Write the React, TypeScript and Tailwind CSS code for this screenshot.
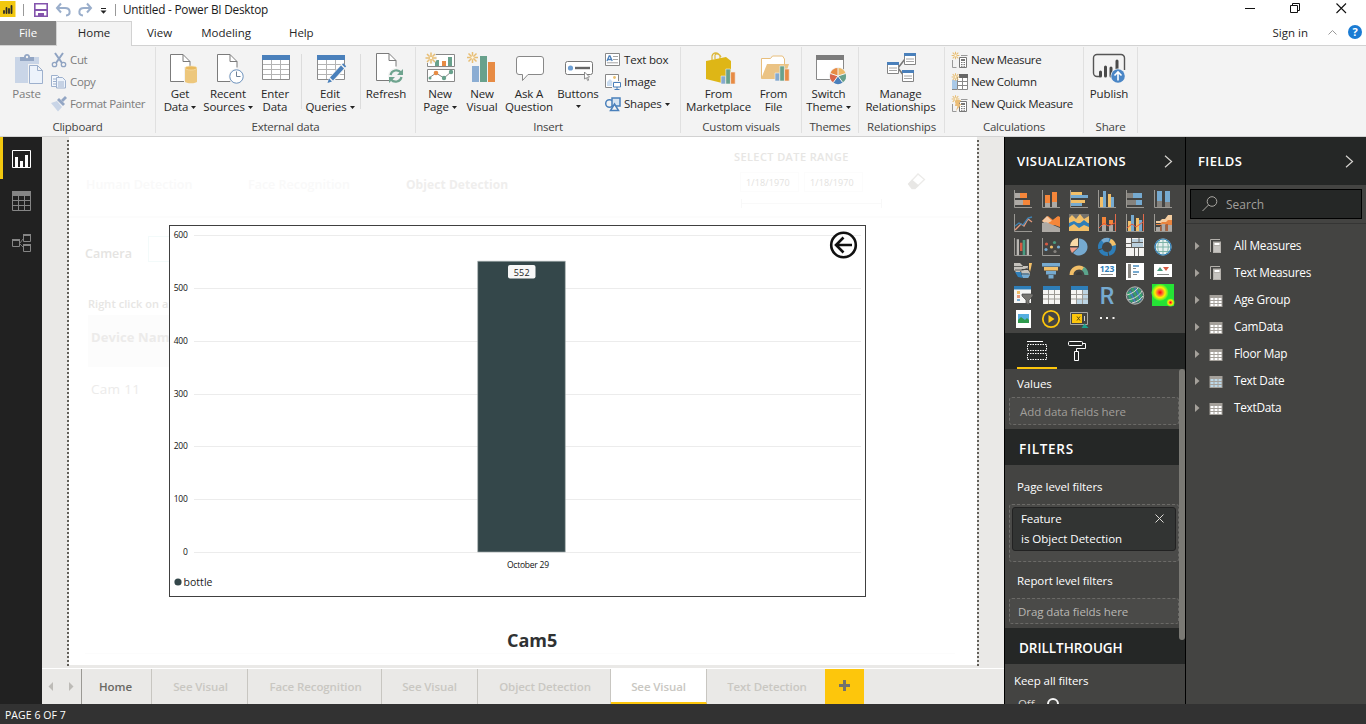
import React from "react";

type Kids = { children?: React.ReactNode };

/* Drawing surface whose size follows its view box. */
function Ic({ b, className = "", children }: { b: string; className?: string } & Kids) {
  const [, , w, h] = b.split(" ");
  return (
    <svg viewBox={b} width={w} height={h} className={"block shrink-0 overflow-visible " + className} fill="none">
      {children}
    </svg>
  );
}

const Caret = () => (
  <svg viewBox="0 0 5 3" width="5" height="3" className="ml-[3px] inline-block align-middle">
    <path d="M0 0h5L2.500 3z" fill="#222" />
  </svg>
);

const Star = ({ x, y, r = 5 }: { x: number; y: number; r?: number }) => (
  <g transform={`translate(${x} ${y}) scale(${r / 5})`} stroke="#e8be74" strokeWidth="1.5">
    <path d="M0-5.5V-2M0 5.500V2M-5.500 0H-2M5.500 0H2M-4-4l2.500 2.500M4 4L1.500 1.500M-4 4l2.500-2.500M4-4L1.500-1.500" />
    <circle r="1.800" strokeWidth="1" fill="#fff7e4" />
  </g>
);

const Doc = ({ x, y }: { x: number; y: number }) => (
  <g transform={`translate(${x} ${y})`}>
    <path d="M.5.5h13l6.500 6.500v21H.5z" fill="#fff" />
    <path d="M14 27.500H.5V.5h12.500l7 7v6M13 .5v7h7" stroke="#7b7b7b" />
  </g>
);

const Grid = ({ x, y }: { x: number; y: number }) => (
  <g transform={`translate(${x} ${y})`}>
    <path d="M.5.5h27v24H.5z" fill="#fff" stroke="#8b8b8b" />
    <path d="M0 0h28v5H0z" fill="#4a80bb" />
    <path d="M1 9.500h26M1 14.500h26M1 19.500h26M9.500 5v19M18.500 5v19" stroke="#b3b3b3" />
  </g>
);

function Big({ w, icon, lines, caret, dim }: { w: string; icon: React.ReactNode; lines: string[]; caret?: boolean; dim?: boolean }) {
  return (
    <div className={`flex ${w} shrink-0 flex-col items-center pt-[7px] tracking-[-.12px] ${dim ? "text-[#7c7c7c]" : "text-[#262626]"}`}>
      {icon}
      <div className="mt-px whitespace-nowrap text-center">
        {lines.map((l, i) => (
          <div key={i}>
            {l}
            {caret && i === lines.length - 1 && <Caret />}
          </div>
        ))}
      </div>
    </div>
  );
}

function Small({ icon, text, caret }: { icon: React.ReactNode; text: string; caret?: boolean }) {
  return (
    <div className="flex h-[22px] items-center gap-[3px] whitespace-nowrap">
      {icon}
      <span className="mb-[2px]">
        {text}
        {caret && <Caret />}
      </span>
    </div>
  );
}

function Group({ w, name, children }: { w: string; name: string } & Kids) {
  return (
    <div className={`flex ${w} h-[90px] shrink-0 flex-col`}>
      <div className="flex h-[74px] w-full">
        <div className="flex flex-1">{children}</div>
        <div className="mt-px w-px bg-[#e0e0e0]" />
      </div>
      <div className="flex h-[13px] w-full">
        <div className="flex-1 text-center tracking-[-.22px] text-[#444]">{name}</div>
        <div className="w-px bg-[#e0e0e0]" />
      </div>
    </div>
  );
}

const Sep = () => <div className="mt-2 h-[55px] w-px shrink-0 bg-[#dcdcdc]" />;

const Bars = ({ x, y }: { x: number; y: number }) => (
  <g transform={`translate(${x} ${y})`} stroke="#f3f3f3" strokeWidth=".6">
    <path d="M0 7h4.600v8H0z" fill="#86aad0" />
    <path d="M4.800 0h4.600v15H4.800z" fill="#68a18c" />
    <path d="M9.600 3h4.600v12H9.600z" fill="#e78b44" />
  </g>
);

const Calc = ({ x, y }: { x: number; y: number }) => (
  <g transform={`translate(${x} ${y})`}>
    <path d="M.5.5h7v10h-7z" fill="#fff" stroke="#777" />
    <path d="M2 2h4v2H2z" fill="#777" />
    <path d="M2 5.500h4M2 7.500h4M2 9.300h4" stroke="#777" strokeDasharray="1 .5" />
  </g>
);

const LinkBox = ({ x, y }: { x: number; y: number }) => (
  <g transform={`translate(${x} ${y})`}>
    <path d="M.5.5h11v11H.5z" fill="#fff" stroke="#848484" />
    <path d="M0 0h12v3H0z" fill="#4a80bb" />
    <path d="M2 6h8M2 8.500h8" stroke="#a4a4a4" />
  </g>
);

function Ribbon() {
  return (
    <div className="flex h-[92px] shrink-0 border-y border-[#d2d2d2] bg-[#f3f3f3]">
      <Group w="w-[156px]" name="Clipboard">
        <Big
          w="ml-[5px] w-[43px]"
          dim
          lines={["Paste"]}
          icon={
            <Ic b="5 53 44 33">
              <path d="M15 57h24v26H15z" fill="#c9d5e7" />
              <path d="M20 61v-4h4c0-4 6-4 6 0h4v4z" fill="#93a6c4" />
              <circle cx="27" cy="57" r="1.200" fill="#f3f3f3" />
              <path d="M28 64h10.500l5.500 5.500V85H28z" fill="#f3f3f3" />
              <path d="M29.500 65.500h8l5 5v13h-13zM37.500 65.500v5h5" fill="#edf3fb" stroke="#9db0cd" />
            </Ic>
          }
        />
        <div className="ml-[3px] mt-[3px] tracking-[-.36px] text-[#7c7c7c]">
          <Small
            text="Cut"
            icon={
              <Ic b="51 52 16 16">
                <path d="M55 53l7 10M63 53l-7 10" stroke="#8fa3c2" strokeWidth="2" />
                <circle cx="54.500" cy="64.500" r="2.200" stroke="#8fa3c2" strokeWidth="1.300" />
                <circle cx="63.500" cy="64.500" r="2.200" stroke="#8fa3c2" strokeWidth="1.300" />
              </Ic>
            }
          />
          <Small
            text="Copy"
            icon={
              <Ic b="51 74 16 16">
                <path d="M51.500 75.500h6l2 2v9h-8z" fill="#f5f8fc" stroke="#9db0cd" />
                <path d="M53 79h4M53 81.500h3M53 84h3" stroke="#9db0cd" />
                <path d="M56.500 77.500h6l3 3v7.500h-9z" fill="#edf3fb" stroke="#9db0cd" />
                <path d="M58 82h6M58 84h6M58 86h6" stroke="#9db0cd" />
              </Ic>
            }
          />
          <Small
            text="Format Painter"
            icon={
              <Ic b="51 96 16 16">
                <path d="M51 103l6-2 5 6-4 4.500z" fill="#c9d5e7" />
                <path d="M57 100l2-2 6 6-2 2z" fill="#93a6c4" />
                <path d="M61 100l4-4 2 2-4 4z" fill="#93a6c4" />
              </Ic>
            }
          />
        </div>
      </Group>

      <Group w="w-[260px]" name="External data">
        <Big
          w="ml-[2px] w-[44px]"
          lines={["Get", "Data"]}
          caret
          icon={
            <Ic b="158 53 44 33">
              <Doc x={170} y={54} />
              <path d="M184 67h14v17h-14z" fill="#f3f3f3" />
              <path d="M185 68v13.500c0 2.400 12 2.400 12 0V68" fill="#edc77c" />
              <ellipse cx="191" cy="68" rx="6" ry="2" fill="#e9b95c" stroke="#f7e3b8" strokeWidth=".6" />
            </Ic>
          }
        />
        <Big
          w="w-[52px]"
          lines={["Recent", "Sources"]}
          caret
          icon={
            <Ic b="206 53 44 33">
              <Doc x={217} y={54} />
              <circle cx="236.500" cy="76.500" r="8" fill="#f3f3f3" />
              <circle cx="236.500" cy="76.500" r="6.700" fill="#fff" stroke="#6d92bd" />
              <path d="M236.500 71.500v5h4" stroke="#6d7f94" />
            </Ic>
          }
        />
        <Big
          w="w-[42px]"
          lines={["Enter", "Data"]}
          icon={
            <Ic b="253 53 44 33">
              <Grid x={262} y={55} />
            </Ic>
          }
        />
        <div className="w-[5px]" />
        <Sep />
        <Big
          w="ml-[1px] w-[54px]"
          lines={["Edit", "Queries"]}
          caret
          icon={
            <Ic b="308 53 44 33">
              <Grid x={317} y={55} />
              <path d="M327 84l2-6L342 63l5 4-14 15z" fill="#f3f3f3" />
              <path d="M327.500 83l1.500-4.500 3 3zM330 77.500l11-12 3 3-11 12zM342 64.500l1.200-1.200 3 3L345 67.500z" fill="#4a80bb" />
            </Ic>
          }
        />
        <div className="w-[3px]" />
        <Sep />
        <Big
          w="w-[50px]"
          lines={["Refresh"]}
          icon={
            <Ic b="364 53 44 33">
              <Doc x={376} y={53} />
              <circle cx="396" cy="76" r="8" fill="#f3f3f3" />
              <path d="M390.500 75c1-5 7.500-6.200 10.500-2.500M401.500 77c-1 5-7.500 6.200-10.500 2.500" stroke="#6fa48f" strokeWidth="2.200" />
              <path d="M403 69v6h-6zM389 83v-6h6z" fill="#6fa48f" />
            </Ic>
          }
        />
      </Group>

      <Group w="w-[265px]" name="Insert">
        <Big
          w="ml-[2px] w-[44px]"
          lines={["New", "Page"]}
          caret
          icon={
            <Ic b="418 53 44 33">
              <path d="M427.500 54.500h27v12h-27zM427.500 69.500h27v12h-27z" fill="#fff" stroke="#888" />
              <path d="M435 60h4v6h-4z" fill="#68a18c" />
              <path d="M442 61h4v5h-4z" fill="#e78b44" />
              <path d="M448 57h4v9h-4z" fill="#68a18c" />
              <path d="M429 78l7-5 8 5 7-6" stroke="#888" />
              <circle cx="436" cy="73" r="2.300" fill="#e78b44" />
              <circle cx="430" cy="78" r="1.500" fill="#68a18c" />
              <circle cx="444" cy="78" r="2.200" fill="#68a18c" />
              <circle cx="451" cy="72" r="2.200" fill="#68a18c" />
              <circle cx="431" cy="58" r="6" fill="#f3f3f3" />
              <Star x={431} y={58} />
            </Ic>
          }
        />
        <Big
          w="w-[40px]"
          lines={["New", "Visual"]}
          icon={
            <Ic b="460 53 44 33">
              <path d="M472 66h7v16h-7z" fill="#8badd3" />
              <path d="M480 56h7v26h-7z" fill="#68a18c" />
              <path d="M488 62h7v20h-7z" fill="#e78b44" />
              <Star x={472.500} y={57.500} />
            </Ic>
          }
        />
        <Big
          w="w-[54px]"
          lines={["Ask A", "Question"]}
          icon={
            <Ic b="507 53 44 33">
              <path d="M519 56.500h22a2.500 2.500 0 012.500 2.500v13a2.500 2.500 0 01-2.500 2.500h-13l-5.500 6v-6H519a2.500 2.500 0 01-2.500-2.500V59a2.500 2.500 0 012.500-2.500z" fill="#fff" stroke="#888" />
            </Ic>
          }
        />
        <div className="flex w-[44px] shrink-0 flex-col items-center pt-[7px] tracking-[-.1px] text-[#262626]">
          <Ic b="556 53 44 33">
            <rect x="565.500" y="61.500" width="27" height="13" rx="2" fill="#fff" stroke="#777" />
            <circle cx="570.500" cy="68" r="2.600" fill="#6d9fd4" />
            <path d="M575 68h15" stroke="#666" strokeWidth="2.400" />
            <path d="M584.500 72l5 5-2 .3 1.200 2.800-1 .5-1.300-2.900-1.900 1.300z" fill="#fff" stroke="#777" strokeWidth=".8" />
          </Ic>
          <div className="mt-px">Buttons</div>
          <svg viewBox="0 0 5 3" width="5" height="3" className="mt-[5px]">
            <path d="M0 0h5L2.500 3z" fill="#222" />
          </svg>
        </div>
        <div className="ml-[5px] mt-[3px] tracking-[-.2px] text-[#262626]">
          <Small
            text="Text box"
            icon={
              <Ic b="605 52 16 16">
                <path d="M605.500 53.500h14v12h-14z" fill="#fff" stroke="#888" />
                <path d="M607 61l2.200-5h.8l2.200 5M608 59.500h3" stroke="#4a80bb" strokeWidth="1.300" />
                <path d="M613 56.500h5M613 59.500h5M607 62.800h11" stroke="#a4a4a4" />
              </Ic>
            }
          />
          <Small
            text="Image"
            icon={
              <Ic b="605 74 16 16">
                <path d="M605.500 74.500h13v13h-13z" fill="#fff" stroke="#888" />
                <circle cx="614.500" cy="77.500" r="1.400" fill="#eabf6e" />
                <path d="M607 86v-4l3-3 4 4v3z" fill="#c9dcf0" />
                <path d="M612 81h10v9h-10z" fill="#f3f3f3" />
                <path d="M613.500 82.500h7v4.500h-7z" fill="#fff" stroke="#4a80bb" />
                <path d="M617 87v2M614.500 89.500h5" stroke="#4a80bb" />
              </Ic>
            }
          />
          <Small
            text="Shapes"
            caret
            icon={
              <Ic b="605 96 16 16">
                <circle cx="609.500" cy="103.500" r="3.800" stroke="#4a80bb" strokeWidth="1.500" />
                <path d="M612 98h8v8h-8z" fill="#d6e4f2" stroke="#4a80bb" strokeWidth="1.500" />
                <path d="M614.500 104l4 6.500h-8z" fill="#f3f3f3" stroke="#4a80bb" strokeWidth="1.500" />
              </Ic>
            }
          />
        </div>
      </Group>

      <Group w="w-[121px]" name="Custom visuals">
        <Big
          w="ml-[2px] w-[71px] tracking-[-.3px]"
          lines={["From", "Marketplace"]}
          icon={
            <Ic b="696 53 44 33">
              <path d="M711 60v-4c1-4 6-4.500 8 0v4M714 59v-4c1-2 5-1 6 2" stroke="#dcb83a" strokeWidth="1.200" />
              <path d="M705 61l20-4 5 4v17l-9 5-16-4z" fill="#deb616" />
              <Bars x={720} y={69} />
            </Ic>
          }
        />
        <Big
          w="w-[39px]"
          lines={["From", "File"]}
          icon={
            <Ic b="751 53 44 33">
              <path d="M760.500 78V58.500h9l2-2.500h10l2 3v6" fill="#fff" stroke="#e8be7c" />
              <path d="M760 79l6-15h22l-5 15z" fill="#ebc384" />
              <Bars x={774} y={66} />
            </Ic>
          }
        />
      </Group>

      <Group w="w-[57px]" name="Themes">
        <Big
          w="w-[53px]"
          lines={["Switch", "Theme"]}
          caret
          icon={
            <Ic b="806 53 44 33">
              <path d="M815.500 55.500h27v24h-27z" fill="#fff" stroke="#888" />
              <path d="M815 55h28v5h-28z" fill="#7c7c7c" />
              <circle cx="837" cy="76" r="9" fill="#f3f3f3" />
              <path d="M837 76v-8a8 8 0 017.600 5.500z" fill="#edb967" />
              <path d="M837 76l7.600-2.500a8 8 0 01-2.900 9z" fill="#68a18c" />
              <path d="M837 76l4.700 6.500a8 8 0 01-9.400 0z" fill="#4a80bb" />
              <path d="M837 76l-4.700 6.500a8 8 0 01-2.900-9z" fill="#d9664a" />
              <path d="M837 76l-7.600-2.500A8 8 0 01837 68z" fill="#e78b44" />
              <path d="M837 76v-8M837 76l7.600-2.500M837 76l4.700 6.500M837 76l-4.700 6.500M837 76l-7.600-2.500" stroke="#f3f3f3" />
            </Ic>
          }
        />
      </Group>

      <Group w="w-[86px]" name="Relationships">
        <Big
          w="w-[83px]"
          lines={["Manage", "Relationships"]}
          icon={
            <Ic b="878 53 44 33">
              <path d="M897 68l7-9M897 68l6 8" stroke="#777" strokeWidth="1.600" />
              <LinkBox x={903} y={53} />
              <LinkBox x={886} y={62} />
              <LinkBox x={901} y={70} />
            </Ic>
          }
        />
      </Group>

      <Group w="w-[139px]" name="Calculations">
        <div className="ml-[6px] mt-[3px] tracking-[-.32px] text-[#262626]">
          <Small
            text="New Measure"
            icon={
              <Ic b="951 52 17 16">
                <path d="M952.500 60v7.500h4M961 55.500h6.500" stroke="#999" />
                <Calc x={959} y={57} />
                <Star x={955.500} y={55.500} r={3.500} />
              </Ic>
            }
          />
          <Small
            text="New Column"
            icon={
              <Ic b="951 74 17 16">
                <path d="M952 80h5v10h-5z" fill="#a9c9e8" />
                <path d="M957.500 76.500h10v13h-10z" fill="#fff" />
                <path d="M957.500 77v12.500h10V77M962.500 78v11M957 81.500h11M957 85.500h11M952 89.500h5" stroke="#888" />
                <path d="M959 74h9v4h-9z" fill="#666" />
                <Star x={955.500} y={77} r={3.500} />
              </Ic>
            }
          />
          <Small
            text="New Quick Measure"
            icon={
              <Ic b="951 96 17 16">
                <path d="M952.500 104v7.500h4M961 99.500h6.500" stroke="#999" />
                <Calc x={959} y={101} />
                <path d="M956 100h5l-2 4h2.500l-5.500 7 1.500-5H955z" fill="#ebbd78" />
                <Star x={955.500} y={99} r={3.500} />
              </Ic>
            }
          />
        </div>
      </Group>

      <Group w="w-[54px]" name="Share">
        <Big
          w="w-[50px]"
          lines={["Publish"]}
          icon={
            <Ic b="1087 53 44 33">
              <path d="M1100 76.500h-3a3.500 3.500 0 01-3.500-3.500V58a3.500 3.500 0 013.500-3.500h24a3.500 3.500 0 013.500 3.500v12" stroke="#555" strokeWidth="1.400" />
              <path d="M1100.500 76v-4M1105.500 76V67M1111 76v-8M1117 75V61" stroke="#4a4a4a" strokeWidth="3" strokeLinecap="round" />
              <circle cx="1118" cy="76" r="7.500" fill="#f3f3f3" />
              <circle cx="1118" cy="76" r="6.800" fill="#4a86c6" />
              <path d="M1118 80.500v-8M1114.500 75.500l3.500-3.500 3.500 3.500" stroke="#fff" strokeWidth="1.600" />
            </Ic>
          }
        />
      </Group>
    </div>
  );
}

function TopBar() {
  return (
    <>
      <div className="flex h-[21px] shrink-0 items-start bg-white">
        <Ic b="0 0 50 20">
          <path d="M0 1h15.500v16H0z" fill="#f2c80f" />
          <path d="M4 13v-2M6.500 13V8M9 13V9M11.500 13V6" stroke="#2b2b2b" strokeWidth="1.800" strokeLinecap="round" />
          <path d="M23.500 4v12" stroke="#999" />
          <path d="M34.800 3.800h12.400v12.400H34.800z" stroke="#8454ad" strokeWidth="1.600" />
          <path d="M35 9h12v2H35z" fill="#8454ad" />
          <path d="M38 13h6v3h-6z" fill="#8454ad" />
        </Ic>
        <Ic b="50 0 73 20">
          <path d="M58 8h7c6 0 6 7 1 7.500M61 3.500L57 8l4 4.500" stroke="#9aaecb" strokeWidth="2" />
          <path d="M90 8h-6c-6 0-6 7-1 7.500M87 3.500L91 8l-4 4.500" stroke="#9aaecb" strokeWidth="2" />
          <path d="M101 8.500h5" stroke="#222" />
          <path d="M100.500 10.500h6l-3 3.200z" fill="#222" />
          <path d="M115.500 4v12" stroke="#999" />
        </Ic>
        <span className="mt-[3px] text-[11.800px] tracking-[-.23px] text-[#1a1a1a]">Untitled - Power BI Desktop</span>
        <div className="flex-1" />
        <Ic b="1240 0 126 20">
          <path d="M1245 8.500h10" stroke="#111" />
          <path d="M1290.500 5.500h7v7h-7zM1292.500 5.500v-2h7v7h-2" stroke="#111" />
          <path d="M1336.500 3.500l9.500 9.500M1346 3.500L1336.500 13" stroke="#111" strokeWidth="1.100" />
        </Ic>
      </div>
      <div className="flex h-[24px] shrink-0 bg-white text-[#262626]">
        <div className="h-full w-[56px] bg-[#838383] pt-[5px] text-center text-white">File</div>
        <div className="relative z-10 -mb-px w-[76px] border-x border-t border-[#d2d2d2] bg-[#f3f3f3] pt-[4px] text-center">Home</div>
        <div className="ml-[15px] pt-[5px]">View</div>
        <div className="ml-[29px] pt-[5px]">Modeling</div>
        <div className="ml-[38px] pt-[5px] tracking-[-.1px]">Help</div>
        <div className="flex-1" />
        <div className="pt-[5px]">Sign in</div>
        <Ic b="1308 21 58 24">
          <path d="M1328.500 34.500l4-4 4 4" stroke="#999" />
          <circle cx="1355" cy="32" r="7" fill="#1a7bd3" />
          <text x="1355" y="36" textAnchor="middle" fontSize="11" fontWeight="700" fill="#fff">?</text>
        </Ic>
      </div>
    </>
  );
}

function Rail() {
  return (
    <div className="flex w-[42px] shrink-0 flex-col bg-[#212121]">
      <div className="h-[42px] border-l-[3px] border-[#f2c80f]">
        <Ic b="3 137 39 42">
          <path d="M12.500 150.500h18v17h-18z" stroke="#fff" />
          <path d="M15 157h3v10h-3zM20 161h3v6h-3zM25 155h3v12h-3z" fill="#fff" />
        </Ic>
      </div>
      <Ic b="0 179 42 42">
        <path d="M12.500 191.500h18v19h-18z" stroke="#858585" />
        <path d="M12 191h19v5H12z" fill="#858585" />
        <path d="M12 200.500h19M12 205.500h19M18.500 195v15M24.500 195v15" stroke="#858585" />
      </Ic>
      <Ic b="0 221 42 42">
        <path d="M12.500 239.500h7v7h-7zM23.500 234.500h7v7h-7zM23.500 244.500h7v7h-7z" stroke="#858585" />
        <path d="M12 240h8M23 235h8M23 245h8" stroke="#858585" strokeWidth="2" />
        <path d="M20 243l3-4M20 244l3 3" stroke="#777" />
      </Ic>
    </div>
  );
}

const ticks = [
  [600, 235.5],
  [500, 288.5],
  [400, 341.5],
  [300, 394.5],
  [200, 446.5],
  [100, 499.5],
  [0, 552.5],
];

function Chart() {
  return (
    <div className="absolute left-[127px] top-[88px] h-[372px] w-[697px] border border-[#404040] bg-white">
      <Ic b="170 226 695 370">
        {ticks.map(([v, y]) => (
          <g key={v}>
            <path d={`M194 ${y}h667`} stroke="#ececec" />
            <text x="187.800" y={y + 2.500} textAnchor="end" fontSize="8.500" fill="#111" textLength={v ? 14 : undefined}>
              {v}
            </text>
          </g>
        ))}
        <path d="M477.700 261.200h87.600v290.800h-87.600z" fill="#34474a" stroke="#a9b1b1" strokeWidth=".6" />
        <rect x="508" y="265" width="27.500" height="13.500" rx="2" fill="#f7f7f7" />
        <text x="521.700" y="275.600" textAnchor="middle" fontSize="9" fill="#222" textLength="16">552</text>
        <text x="528" y="567.600" textAnchor="middle" fontSize="8.500" fill="#111" textLength="42">October 29</text>
        <circle cx="178" cy="582" r="3.600" fill="#34474a" />
        <text x="183.500" y="585.700" fontSize="10.500" fill="#222" textLength="29">bottle</text>
        <circle cx="843.500" cy="245" r="12.300" fill="#fff" stroke="#111" strokeWidth="2.600" />
        <path d="M852 245h-15.500M843.500 237.500l-7.500 7.500 7.500 7.500" stroke="#111" strokeWidth="2.600" />
      </Ic>
    </div>
  );
}

function Canvas() {
  const dots =
    "absolute top-[3px] h-[526px] w-[2px] bg-[repeating-linear-gradient(to_bottom,#62605a_0px,#62605a_2px,transparent_2px,transparent_4px)]";
  return (
    <div className="relative min-h-0 flex-1 overflow-hidden bg-[#eae9e7]">
      <div className="ml-[27px] h-[528px] w-[908px] bg-white" />
      <div className={"left-[25px] " + dots} />
      <div className={"left-[935px] " + dots} />
      <div className="absolute left-[27px] top-[79px] h-[2px] w-[904px] bg-[#fcfcfc]" />
      <div className="absolute left-[44px] top-[40px] text-[12.500px] font-semibold leading-4 text-[#f9f9f9]">Human Detection</div>
      <div className="absolute left-[206px] top-[40px] text-[12.500px] font-semibold leading-4 text-[#f9f9f9]">Face Recognition</div>
      <div className="absolute left-[364px] top-[40px] text-[12px] font-bold leading-4 tracking-[.07px] text-[#efeeed]">Object Detection</div>
      <div className="absolute left-[692px] top-[12px] text-[11px] font-semibold leading-4 tracking-[.4px] text-[#e7e6e4]">SELECT DATE RANGE</div>
      <div className="absolute left-[698px] top-[35px] h-[20px] w-[59px] border border-[#fcfcfc] pl-[5px] text-[9px] leading-[19px] tracking-[.12px] text-[#e3e2e0]">1/18/1970</div>
      <div className="absolute left-[762px] top-[35px] h-[20px] w-[59px] border border-[#fcfcfc] pl-[5px] text-[9px] leading-[19px] tracking-[.12px] text-[#e3e2e0]">1/18/1970</div>
      <div className="absolute left-[699px] top-[62px] h-[9px] w-[141px] border-x border-[#f8f8f8] pt-1">
        <div className="h-px bg-[#f9f9f9]" />
      </div>
      <div className="absolute left-[865px] top-[35px]">
        <Ic b="907 172 20 18">
          <path d="M908.500 184l9.500-10 6.500 5.500-9.500 9h-3z" stroke="#ecebe9" strokeWidth="1.300" />
          <path d="M908 184l4-4.500 7 6-4 3.500h-3z" fill="#e8e7e5" />
        </Ic>
      </div>
      <div className="absolute left-[43px] top-[109px] text-[12.500px] font-semibold leading-4 text-[#e5e4e2]">Camera</div>
      <div className="absolute left-[106px] top-[99px] h-[26px] w-[60px] border border-[#f3fafa]" />
      <div className="absolute left-[46px] top-[159px] w-[81px] overflow-hidden whitespace-nowrap text-[11px] font-semibold leading-4 tracking-[.05px] text-[#e7e6e4]">Right click on a</div>
      <div className="absolute left-[46px] top-[178px] h-[52px] w-[81px] overflow-hidden bg-[#fcfcfc] pl-[3px] pt-[12px] text-[13px] font-bold leading-5 tracking-[.1px] text-[#ecebea]">
        <div className="whitespace-nowrap">Device Nam</div>
      </div>
      <div className="absolute left-[49px] top-[244px] text-[13.500px] leading-4 tracking-[.3px] text-[#ecebea]">Cam 11</div>
      <div className="absolute left-[43px] top-[516px] h-px w-[870px] bg-[#fcfcfc]" />
      <Chart />
      <div className="absolute left-[465px] top-[491px] text-[18px] font-bold leading-6 text-[#2f3233]">Cam5</div>
    </div>
  );
}

function Tab({ w, children, tone = "border-r border-[#c8c6c1] text-[#c9c7c2]" }: { w: string; tone?: string } & Kids) {
  return (
    <div className={`flex h-full shrink-0 items-center justify-center whitespace-nowrap text-[11.500px] font-semibold tracking-[-.1px] ${w} ${tone}`}>
      {children}
    </div>
  );
}

function PageTabs() {
  return (
    <div className="flex h-[36px] shrink-0 border-t border-white bg-[#eae9e7]">
      <Ic b="42 669 39 35">
        <path d="M53 682v9l-4.500-4.500z" fill="#bdbbb7" />
        <path d="M69 682v9l4.500-4.500z" fill="#bdbbb7" />
      </Ic>
      <div className="w-px bg-[#9b9994]" />
      <Tab w="w-[70px]" tone="border-r border-[#c8c6c1] text-[#696863] pr-[2px]">Home</Tab>
      <Tab w="w-[96px]" tone="border-r border-[#c8c6c1] text-[#c9c7c2] pl-[2px]">See Visual</Tab>
      <Tab w="w-[134px]" tone="border-r border-[#c8c6c1] text-[#c9c7c2] pl-[2px]">Face Recognition</Tab>
      <Tab w="w-[96px]">See Visual</Tab>
      <Tab w="w-[133px]" tone="border-r border-[#c8c6c1] text-[#c9c7c2] pl-[2px]">Object Detection</Tab>
      <Tab w="w-[96px]" tone="border-r border-r-[#c8c6c1] border-b-[2px] border-b-[#fdc60c] bg-white text-[#c9c7c2] pt-[2px]">See Visual</Tab>
      <Tab w="w-[118px]" tone="text-[#c9c7c2] pl-[2px]">Text Detection</Tab>
      <div className="flex w-[39px] justify-center bg-[#fdc60c] pt-[11px]">
        <Ic b="0 0 11 11">
          <path d="M5.500 0v11M0 5.500h11" stroke="#74726d" strokeWidth="3" />
        </Ic>
      </div>
    </div>
  );
}

const O = "#f5863a";
const B = "#76aad0";
const D = "#2e7eb8";
const Y = "#f2bf68";
const G = "#aeaaa5";
const AX = "M5.5 3v17.500H23";

const Axis = () => <path d={AX} stroke="#9a9893" />;

const visuals: React.ReactNode[] = [
  <><Axis /><path d="M6 6h5v5H6zM6 13h8v5H6z" fill={G} /><path d="M11 6h7v5h-7zM14 13h7v5h-7z" fill={O} /></>,
  <><Axis /><path d="M8 8h5v8H8zM15 5h5v10h-5z" fill={O} /><path d="M8 16h5v4H8zM15 15h5v5h-5z" fill={G} /></>,
  <><Axis /><path d="M6 5h11v3H6zM6 13h14v3H6z" fill={Y} /><path d="M6 8h17v3H6zM6 16h11v3H6z" fill={B} /></>,
  <><Axis /><path d="M7 10h3v10H7zM15 7h3v13h-3z" fill={Y} /><path d="M10 4h3v16h-3zM18 10h3v10h-3z" fill={B} /></>,
  <><Axis /><path d="M6 6h6v5H6zM6 13h9v5H6z" fill="#85827d" /><path d="M12 6h9v5h-9zM15 13h6v5h-6z" fill={B} /></>,
  <><Axis /><path d="M8 4h5v10H8zM16 4h5v11h-5z" fill={B} /><path d="M8 14h5v6H8zM16 15h5v5h-5z" fill="#85827d" /></>,

  <><Axis /><path d="M6 19l6-6 3 2 4-7 4 3" stroke="#e59a7c" strokeWidth="1.300" /><path d="M6 15l4-3 4 2 5-7 4-1" stroke="#3f82b2" strokeWidth="1.300" /></>,
  <><path d="M5 10l6-5 5 4 5-4 2 1v8L14 14z" fill={O} /><path d="M5 10l5-5 5 5-6 3z" fill="#f6c9a2" /><path d="M5 12l4-1 14 6v4H5z" fill={G} /><path d="M12 12l8-6 3 1v9z" fill={O} /></>,
  <><path d="M4 3h20v17H4z" fill="#74726d" /><path d="M4 7l3-3 4 4 4-5 4 5 5-3v7H4z" fill={Y} /><path d="M4 12l5-2 5 3 5-4 5 4v5l-5-2-5 3-5-4-5 3z" fill={D} /><path d="M4 16l5-3 5 4 5-3 5 2v4H4z" fill={Y} /></>,
  <><path d="M22.500 3v17" stroke="#e36a4a" /><Axis /><path d="M9 6h4v8H9zM16 9h4v4h-4z" fill={O} /><path d="M9 14h4v6H9zM16 14h4v6h-4z" fill={G} /><path d="M6 17l5-5 4 3 7-3" stroke="#e9593a" /></>,
  <><path d="M22.500 3v17" stroke="#e36a4a" /><Axis /><path d="M7 10h3v10H7zM15 7h3v13h-3z" fill={Y} /><path d="M10 4h3v16h-3zM18 9h3v11h-3z" fill={B} /><path d="M6 17l5-4 4 3 7-5" stroke="#e9593a" /></>,
  <><Axis /><path d="M7 10h4l2-2h3l3-4h4v5l-4 3H7z" fill="#f4cda0" /><path d="M7 13h4l2-2h4l2-2h4v5H7z" fill="#e9843f" /><path d="M7 16h4v4H7zM12.500 13h4v7h-4zM19 14h4v6h-4z" fill={G} /><path d="M11 15h1.500v5H11zM16.500 13H19v7h-2.500z" fill="#a8623f" /></>,

  <><Axis /><path d="M7.700 4.300H10v16H7.700zM17.700 4.300H20v16h-2.300z" fill="#b9b7b2" /><path d="M11 7.700h2.500v8.300H11z" fill="#d65a42" /><path d="M13.700 5h2.600v15h-2.600z" fill="#499b80" /></>,
  <><Axis /><circle cx="9.500" cy="9" r="1.600" fill="#d65a42" /><circle cx="17.500" cy="7.500" r="1.600" fill="#499b80" /><circle cx="14.500" cy="12" r="1.600" fill={Y} /><circle cx="21.500" cy="12" r="1.600" fill={B} /><circle cx="9" cy="14.500" r="1.600" fill={B} /><circle cx="18" cy="16.500" r="1.600" fill="#85827d" /></>,
  <><path d="M14 12V3.500a8.500 8.500 0 11-6 14.500z" fill={B} /><path d="M13 11L5 11a8.500 8.500 0 018-8z" fill="#f8d9a6" /><path d="M13 12.500l-6 5.500a8.500 8.500 0 01-2-5.500z" fill="#f0a08c" /></>,
  <><circle cx="14" cy="12" r="7" stroke={D} strokeWidth="4" strokeDasharray="9 1" /><path d="M17 5.500a7 7 0 014 5" stroke={Y} strokeWidth="4" /><path d="M9.500 6.500A7 7 0 0116 5" stroke={B} strokeWidth="4" /></>,
  <><path d="M5 3h18v18H5z" fill="#f3f2f0" /><path d="M11 4h11v8H11z" fill="#b9cfdd" /><path d="M5 12.500h18M10.500 3v9M18 3v5M13.500 13v8M17.500 13v8M10.500 7.500H22M5 8.500h5" stroke="#62615d" /></>,
  <><circle cx="14" cy="12" r="8.500" fill="#e7f0f0" /><path d="M14 4v16M6 12h16M8 7.500h12M8 16.500h12M11 4.500c-3 5-3 10 0 15M17 4.500c3 5 3 10 0 15" stroke="#7db3a7" /><circle cx="14" cy="12" r="8" stroke={D} strokeWidth="1.200" /></>,

  <><path d="M5 4h6l3 3h5v3h-6l-2 3H7l-2-2z" fill="#c5c2bc" /><path d="M12 11h7l2 3-2 5-3-2-3 1z" fill="#c5c2bc" /><path d="M13 14h6l2 2-2 3h-5z" fill={B} /><path d="M6 13h6l2 6-5-1z" fill={D} /><path d="M20 4h3l-1 5-1 4-1-3z" fill={Y} /><path d="M5 7.500h9M6 11h8l5-2M12 15h8" stroke="#474745" strokeWidth=".8" /></>,
  <><path d="M5 4h18v3.500H5zM9 12h10v3.500H9z" fill={B} /><path d="M7 8h14v3.500H7z" fill={Y} /><path d="M11.500 16h5v3.500h-5z" fill={B} /></>,
  <><path d="M6.500 16a7.500 7.500 0 0112-6" stroke={Y} strokeWidth="4" /><path d="M18 9.500a8 8 0 013.500 6.500" stroke="#5ba58c" strokeWidth="4" /><path d="M11 16c0-4 6-4 6 0z" fill="#3a3a38" /></>,
  <><path d="M5 5h18v13H5z" fill="#fff" /><text x="14" y="13" textAnchor="middle" fontSize="8.500" fontWeight="700" fill={D}>123</text><path d="M8 15.500h12" stroke="#888" /></>,
  <><path d="M5 4h18v17H5z" fill="#fff" /><path d="M7 5h3v14H7z" fill="#8b8984" /><path d="M12 6h6v2h-6zM12 12h6v2h-6z" fill={B} /><path d="M12 9h3v1h-3zM12 15h4v1h-4z" fill="#888" /></>,
  <><path d="M5 5h18v13H5z" fill="#fff" /><path d="M8 12l3-4 3 4z" fill="#499b80" /><path d="M14 8h6l-3 4z" fill="#d65a42" /><path d="M8 15.500h12" stroke="#888" /></>,

  <><path d="M5 3h17v17H5z" fill="#f6f5f3" /><path d="M5 3h17v3.500H5z" fill={D} /><path d="M8 8h3v3H8z" fill={Y} /><path d="M8 12h3v3H8z" fill="#e59a7c" /><path d="M8 16h3v2H8z" fill={B} /><path d="M13 11h11v2l-4 4v5l-3-2v-3l-4-4z" fill="#777570" stroke="#444442" strokeWidth=".7" /></>,
  <><path d="M6 3h17v18H6z" fill="#f6f5f3" /><path d="M6 3h17v4H6z" fill={D} /><path d="M6 11.500h17M6 16h17M11.500 7v14M17.500 7v14" stroke="#9c9a95" /></>,
  <><path d="M6 3h17v18H6z" fill="#f6f5f3" /><path d="M6 3h17v4H6z" fill={D} /><path d="M17.500 7H23v14h-5.500zM11.500 16H18v5h-6.500z" fill="#bcd4e3" /><path d="M6 11.500h17M6 16h17M11.500 7v14M17.500 7v14" stroke="#9c9a95" /></>,
  <><text x="14" y="20.500" textAnchor="middle" fontSize="23" fontFamily="Roboto, sans-serif" fontWeight="500" fill={B}>R</text></>,
  <><circle cx="14" cy="12.500" r="8.800" fill="#4f6f74" /><path d="M7 9l4 10M11 5l7 14M17 5l4 10" stroke="#35a06c" strokeWidth="2.600" /><path d="M9 8l5 11M14 5l6 12" stroke="#3b86c0" strokeWidth="1.600" /><path d="M6 12c4-1 9-4 11-7M7 17c6-1 12-5 14-9M11 20c5-1 9-4 11-7" stroke="#dcdad6" /><circle cx="14" cy="12.500" r="8.700" stroke="#b6b3ae" /></>,
  <><defs><radialGradient id="heat"><stop offset="0" stopColor="#f00" /><stop offset=".3" stopColor="#f63" /><stop offset=".6" stopColor="#fe0" /><stop offset="1" stopColor="#3e3" /></radialGradient></defs><path d="M3 1h22v22H3z" fill="#25e336" /><circle cx="11" cy="9.500" r="8.500" fill="url(#heat)" /><circle cx="21.500" cy="19.500" r="4" fill="url(#heat)" /></>,

  <><path d="M7 3h15v18H7z" fill="#fff" /><path d="M9 7h11v9H9z" fill="#53aee0" /><path d="M9 16v-3l3-3 4 3 2-2 2 2v3z" fill="#2f9a4d" /></>,
  <><circle cx="14" cy="12" r="8.200" stroke="#fdc60c" strokeWidth="1.800" /><path d="M11.500 8v8l6-4z" fill="#fdc60c" /></>,
  <><path d="M5.500 5.500h17v12h-17z" stroke="#aaa8a3" /><path d="M7 7h10v9H7z" fill="#fdc60c" /><path d="M12 9.500l3 4M15 9.500l-3 4" stroke="#5c4a10" /><path d="M19.500 9v5" stroke="#ccc" /><path d="M16.500 21l3-4.500 4 4.500z" fill="#1aa08c" /></>,
  <><path d="M7 11h2M13 11h2M19.500 11h2" stroke="#f2f0ee" strokeWidth="2" /></>,
];

function PaneHead({ title }: { title: string }) {
  return (
    <div className="flex h-[48px] shrink-0 items-center bg-[#252726] pl-3 pr-[12px]">
      <span className="text-[13px] font-semibold tracking-[.4px] text-white">{title}</span>
      <div className="flex-1" />
      <Ic b="0 0 9 13">
        <path d="M1 .8l6.500 5.700L1 12.200" stroke="#d5d3cf" strokeWidth="1.200" />
      </Ic>
    </div>
  );
}

const Band = ({ children, track }: { track: string } & Kids) => (
  <div className={`flex h-[36px] shrink-0 items-center bg-[#252726] pl-[14px] pt-[5px] text-[13.500px] font-semibold text-white ${track}`}>{children}</div>
);

const drop = "ml-[4px] w-[170px] shrink-0 rounded-[3px] border border-dashed border-[#6b6a67] bg-[#4a4a48]";

function Visualizations() {
  return (
    <div className="relative flex w-[182px] shrink-0 flex-col overflow-hidden border-x border-black bg-[#444442] text-[11.500px] tracking-[-.08px] text-white">
      <PaneHead title="VISUALIZATIONS" />
      <div className="flex h-[148px] shrink-0 flex-wrap content-start pl-[4px] pr-[8px] pt-[2px]">
        {visuals.map((v, i) => (
          <Ic key={i} b="0 0 28 24">
            {v}
          </Ic>
        ))}
      </div>
      <div className="flex h-[36px] shrink-0 bg-[#252726] pl-3">
        <div className="h-full w-[40px] border-b-2 border-[#fdc60c]">
          <Ic b="1017 333 40 34">
            <path d="M1027 341.500h16" stroke="#fff" />
            <path d="M1027.500 344.500h19v6h-19zM1027.500 353.500h19v6h-19z" stroke="#fff" strokeDasharray="1.500 1" />
          </Ic>
        </div>
        <Ic b="1057 333 40 34">
          <rect x="1068.500" y="341.500" width="14" height="4" rx="1" stroke="#fff" />
          <path d="M1082.500 343.500h3v5h-9v3M1075 351.500h3.500v9H1074.500v-9z" stroke="#fff" />
        </Ic>
      </div>
      <div className="ml-3 mt-[8px] h-[20px] shrink-0 leading-[14px]">Values</div>
      <div className={drop + " flex h-[28px] items-center pl-[10px] text-[#a19f9b]"}>Add data fields here</div>
      <div className="h-[4px] shrink-0" />
      <Band track="tracking-[.7px]">FILTERS</Band>
      <div className="ml-3 mt-[15px] h-[24px] shrink-0 leading-[14px]">Page level filters</div>
      <div className={drop + " h-[58px] p-[2px]"}>
        <div className="flex h-[44px] w-[164px] justify-between rounded-[3px] border border-[#222] bg-[#323433] pl-[8px] pr-[11px] pt-[1px]">
          <div className="leading-[20px]">
            <div>Feature</div>
            <div className="tracking-[0px]">is Object Detection</div>
          </div>
          <Ic b="0 0 9 9" className="mt-[5px]">
            <path d="M.5.5l8 8M8.500.5l-8 8" stroke="#dcdad6" />
          </Ic>
        </div>
      </div>
      <div className="ml-3 mt-[12px] h-[24px] shrink-0 leading-[14px]">Report level filters</div>
      <div className={drop + " flex h-[26px] items-center pl-[8px] text-[#b9b7b3]"}>Drag data fields here</div>
      <div className="h-[4px] shrink-0" />
      <Band track="tracking-[-.05px]">DRILLTHROUGH</Band>
      <div className="ml-[9px] mt-[10px] shrink-0 leading-[14px]">Keep all filters</div>
      <div className="ml-[13px] mt-[9px] flex shrink-0 gap-[12px] leading-[14px] text-[#d5d3cf]">
        Off
        <Ic b="1047 697 14 14">
          <circle cx="1054" cy="704" r="5" stroke="#f4f4f4" strokeWidth="2" />
        </Ic>
      </div>
      <div className="absolute right-0 top-[232px] h-[271px] w-[6px] rounded-[3px] bg-[#7a7974]" />
    </div>
  );
}

const fields: [string, string][] = [
  ["All Measures", "m"],
  ["Text Measures", "m"],
  ["Age Group", "t"],
  ["CamData", "t"],
  ["Floor Map", "t"],
  ["Text Date", "d"],
  ["TextData", "t"],
];

function Fields() {
  return (
    <div className="flex flex-1 flex-col bg-[#444442] text-[11.800px] text-white">
      <PaneHead title="FIELDS" />
      <div className="ml-[4px] mt-[4px] flex h-[30px] w-[172px] items-center border border-black bg-[#252726] pl-[11px] text-[12px] text-[#a19f9b]">
        <Ic b="0 0 16 16">
          <circle cx="10" cy="5.500" r="4.800" stroke="#aaa8a3" />
          <path d="M6.500 9L.5 15" stroke="#aaa8a3" />
        </Ic>
        <span className="ml-[8px]">Search</span>
      </div>
      <div className="mt-[4px] h-px bg-[#353534]" />
      <div className="mt-[8px] flex flex-col tracking-[-.25px]">
        {fields.map(([name, kind]) => (
          <div key={name} className="flex h-[27px] items-center pl-[9px]">
            <Ic b="0 0 5 8">
              <path d="M0 0l4.500 4L0 8z" fill="#a5a19b" />
            </Ic>
            {kind === "m" ? (
              <Ic b="0 0 14 14" className="ml-[9px] mt-[1px]">
                <path d="M1.500 13V.5H11" stroke="#b3b0ab" />
                <path d="M4 2.500h8v11.500H4z" fill="#b3b0ab" />
                <path d="M5.500 4h5v2h-5z" fill="#fff" />
                <path d="M5.500 8h5M5.500 10h5M5.500 12h5" stroke="#fff" strokeDasharray="1 1" />
              </Ic>
            ) : (
              <Ic b="0 0 14 12" className="ml-[9px] mt-[2px]">
                <path d="M.5 0h13v12H.5z" fill="#a5a19b" />
                <path
                  d="M1.500 3h3v2h-3zM5.500 3h3v2h-3zM9.500 3h3v2h-3zM1.500 6h3v2h-3zM5.500 6h3v2h-3zM9.500 6h3v2h-3zM1.500 9h3v2h-3zM5.500 9h3v2h-3zM9.500 9h3v2h-3z"
                  fill={kind === "d" ? "#bcd8e8" : "#fff"}
                />
              </Ic>
            )}
            <span className="ml-[11px]">{name}</span>
          </div>
        ))}
      </div>
    </div>
  );
}

export default function App() {
  return (
    <div className="flex h-[724px] w-[1366px] flex-col overflow-hidden bg-white font-['Open_Sans','Noto_Sans',sans-serif] text-[11.500px] leading-[13px]">
      <TopBar />
      <Ribbon />
      <div className="flex h-[567px] shrink-0">
        <Rail />
        <div className="flex w-[962px] shrink-0 flex-col">
          <Canvas />
          <PageTabs />
        </div>
        <Visualizations />
        <Fields />
      </div>
      <div className="flex h-[20px] items-center bg-[#323232] pl-[5px] pt-[2px] text-[10.500px] tracking-[.05px] text-white">PAGE 6 OF 7</div>
    </div>
  );
}
